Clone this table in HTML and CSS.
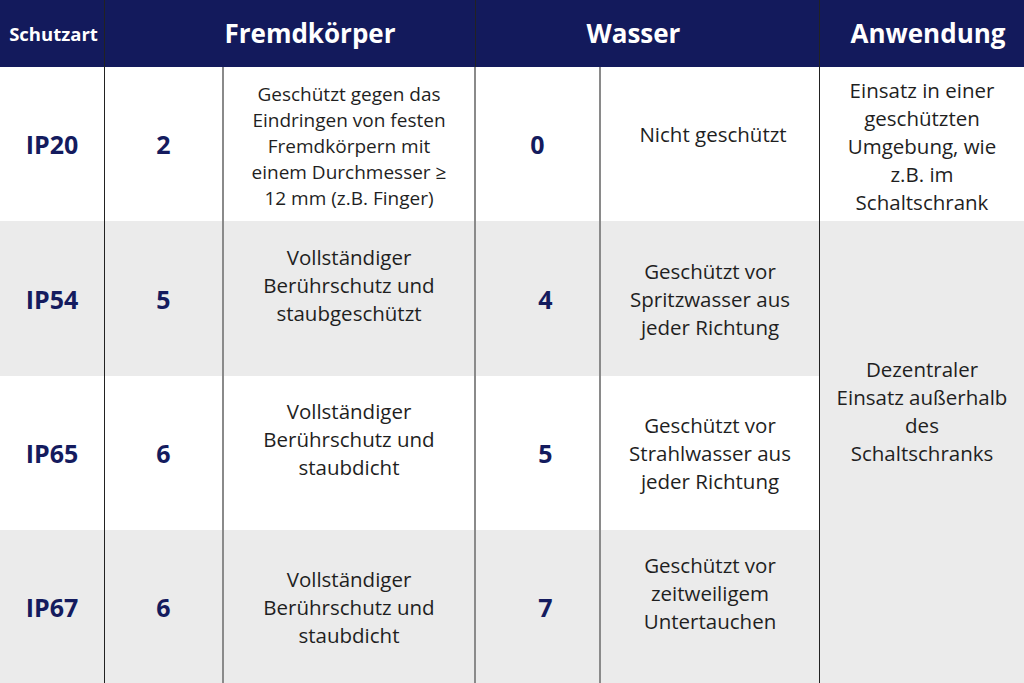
FILE: index.html
```html
<!DOCTYPE html>
<html lang="de">
<head>
<meta charset="utf-8">
<title>Schutzarten</title>
<link rel="stylesheet" href="styles.css">
</head>
<body>
<div class="table">
  <div class="hd hd-first dark-r"><span class="hd-small">Schutzart</span></div>
  <div class="hd span2 dark-r hd-right">Fremdkörper</div>
  <div class="hd span2 dark-r hd-left">Wasser</div>
  <div class="hd hd-app">Anwendung</div>

  <div class="cell ip dark-r">IP20</div>
  <div class="cell num grey-r">2</div>
  <div class="cell txt small grey-r">Geschützt gegen das Eindringen von festen Fremdkörpern mit einem Durchmesser ≥ 12 mm (z.B. Finger)</div>
  <div class="cell num grey-r">0</div>
  <div class="cell txt dark-r up20">Nicht geschützt</div>
  <div class="cell txt app1">Einsatz in einer geschützten Umgebung, wie z.B. im Schaltschrank</div>

  <div class="cell ip dark-r alt">IP54</div>
  <div class="cell num grey-r alt">5</div>
  <div class="cell txt grey-r alt up28">Vollständiger Berührschutz und staubgeschützt</div>
  <div class="cell num shift grey-r alt">4</div>
  <div class="cell txt dark-r alt">Geschützt vor Spritzwasser aus jeder Richtung</div>
  <div class="cell txt app2 alt">Dezentraler Einsatz außerhalb des Schaltschranks</div>

  <div class="cell ip dark-r">IP65</div>
  <div class="cell num grey-r">6</div>
  <div class="cell txt grey-r up28">Vollständiger Berührschutz und staubdicht</div>
  <div class="cell num shift grey-r">5</div>
  <div class="cell txt dark-r">Geschützt vor Strahlwasser aus jeder Richtung</div>

  <div class="cell ip dark-r alt">IP67</div>
  <div class="cell num grey-r alt">6</div>
  <div class="cell txt grey-r alt">Vollständiger Berührschutz und staubdicht</div>
  <div class="cell num shift grey-r alt">7</div>
  <div class="cell txt dark-r alt up28">Geschützt vor zeitweiligem Untertauchen</div>
</div>
</body>
</html>
```
FILE: styles.css
```css
* { box-sizing: border-box; }
html, body { margin: 0; padding: 0; background: #ffffff; }
body {
  font-family: "Open Sans", "Noto Sans", "DejaVu Sans", sans-serif;
  width: 1024px;
  height: 683px;
  overflow: hidden;
}
.table {
  display: grid;
  grid-template-columns: 105px 119px 252px 125px 219px 204px;
  grid-template-rows: 67px 154px 155px 154px 153px;
  width: 1024px;
  height: 683px;
}
.hd {
  background: #131a5c;
  color: #ffffff;
  font-weight: 700;
  font-size: 26px;
  display: flex;
  align-items: center;
  justify-content: center;
  padding-bottom: 1px;
}
.hd-first { padding-left: 3px; }
.hd-small { font-size: 18.5px; }
.hd-right { padding-left: 40px; }
.hd-left { padding-right: 28px; }
.hd-app { padding-left: 12px; }
.span2 { grid-column: span 2; }
.cell {
  display: flex;
  align-items: center;
  justify-content: center;
  text-align: center;
  background: #ffffff;
  color: #1f1f1f;
}
.alt { background: #ebebeb; }
.dark-r { border-right: 1px solid #222222; }
.grey-r { border-right: 2px solid #8a8a8a; }
.ip, .num {
  color: #141b5e;
  font-weight: 700;
  font-size: 25px;
}
.shift { padding-left: 16px; }
.txt {
  font-size: 20.5px;
  line-height: 28px;
  padding: 0 16px;
}
.small {
  font-size: 19px;
  line-height: 26px;
  padding: 4px 22px 0;
}
.up20 { padding-bottom: 20px; padding-left: 22px; }
.up28 { padding-bottom: 28px; }
.app1 { padding: 4px 15px 0; }
.app2 {
  grid-column: 6;
  grid-row: 3 / span 3;
  padding: 0 15px 82px;
}
```
